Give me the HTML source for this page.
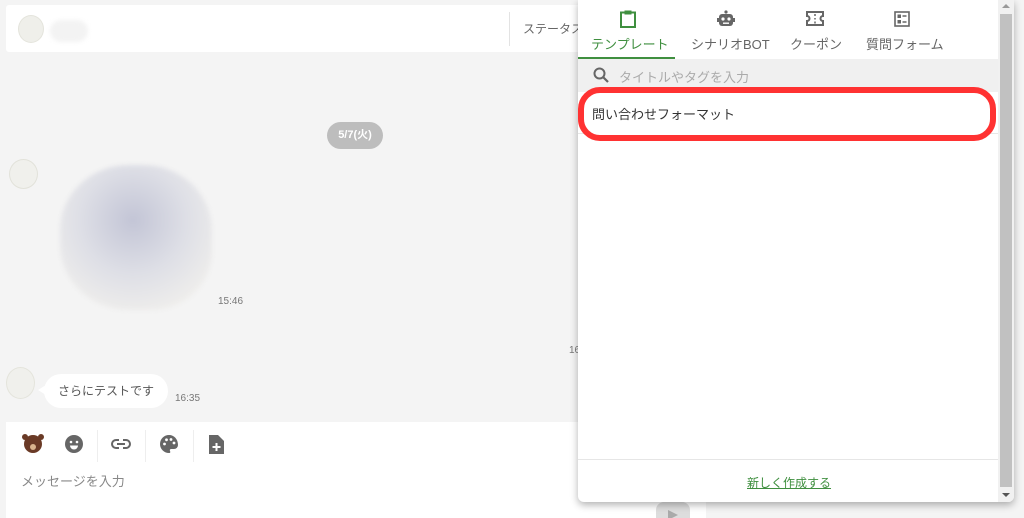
<!DOCTYPE html>
<html style="width:1024px;height:518px;overflow:hidden"><head><meta charset="utf-8"><style>
*{box-sizing:border-box;margin:0;padding:0}
body{width:1024px;height:518px;overflow:hidden;background:#f4f4f4;font-family:"Liberation Sans","Noto Sans CJK JP",sans-serif;position:relative;color:#333}
.abs{position:absolute}
</style></head><body>
<!-- header -->
<div class="abs" style="left:6px;top:5px;width:600px;height:47px;background:#fff;border-radius:3px"></div>
<div class="abs" style="left:18px;top:15px;width:26px;height:28px;border-radius:50%;background:#efefea;border:1px solid #e4e4dc"></div>
<div class="abs" style="left:50px;top:20px;width:38px;height:22px;border-radius:11px;background:#f3f3f3;filter:blur(2px)"></div>
<div class="abs" style="left:509px;top:12px;width:1px;height:34px;background:#e3e3e3"></div>
<div class="abs" style="left:523px;top:20px;font-size:12px;color:#666;white-space:nowrap">ステータス</div>
<!-- date pill -->
<div class="abs" style="left:327px;top:122px;width:56px;height:27px;border-radius:14px;background:#bdbdbd;color:#fff;font-size:11px;font-weight:bold;text-align:center;line-height:27px">5/7(火)</div>
<!-- avatar + image -->
<div class="abs" style="left:9px;top:159px;width:29px;height:30px;border-radius:50%;background:#f0f0ec;border:1px solid #e2e2da"></div>
<div class="abs" style="left:60px;top:165px;width:152px;height:145px;border-radius:45% 45% 40% 45%;background:radial-gradient(circle at 48% 38%,#c3c5d6,#dedfe6 45%,#efeeec 80%);filter:blur(2px)"></div>
<div class="abs" style="left:218px;top:296px;font-size:10px;color:#777">15:46</div>
<div class="abs" style="left:569px;top:345px;font-size:10px;color:#777">16</div>
<!-- message -->
<div class="abs" style="left:6px;top:367px;width:29px;height:32px;border-radius:50%;background:#f0f0ec;border:1px solid #e4e4dc"></div>
<div class="abs" style="left:44px;top:374px;height:34px;border-radius:17px;background:#fff;font-size:12px;color:#555;line-height:34px;padding:0 14px;white-space:nowrap">さらにテストです</div>
<div class="abs" style="left:38px;top:385px;width:0;height:0;border-top:5px solid transparent;border-bottom:5px solid transparent;border-right:8px solid #fff"></div>
<div class="abs" style="left:175px;top:393px;font-size:10px;color:#777">16:35</div>
<!-- input area -->
<div class="abs" style="left:6px;top:422px;width:700px;height:96px;background:#fff"></div>
<div class="abs" style="left:24px;top:435px;width:18px;height:18px;border-radius:50%;background:#6a3a26"></div>
<div class="abs" style="left:22px;top:434px;width:6px;height:6px;border-radius:50%;background:#6a3a26"></div>
<div class="abs" style="left:38px;top:434px;width:6px;height:6px;border-radius:50%;background:#6a3a26"></div>
<div class="abs" style="left:30px;top:444px;width:6px;height:6px;border-radius:50%;background:#d9b48e"></div>
<svg class="abs" style="left:65px;top:435px" width="18" height="18" viewBox="0 0 18 18"><circle cx="9" cy="9" r="9" fill="#666"/><circle cx="6" cy="7" r="1.3" fill="#fff"/><circle cx="12" cy="7" r="1.3" fill="#fff"/><path d="M5 10.5h8a4 4 0 0 1-8 0z" fill="#fff"/></svg>
<div class="abs" style="left:97px;top:430px;width:1px;height:32px;background:#eee"></div>
<svg class="abs" style="left:111px;top:437px" width="20" height="14" viewBox="0 0 20 14"><path d="M8 3H5a4 4 0 0 0 0 8h3M12 3h3a4 4 0 0 1 0 8h-3M6 7h8" stroke="#666" stroke-width="2" fill="none"/></svg>
<div class="abs" style="left:145px;top:430px;width:1px;height:32px;background:#eee"></div>
<svg class="abs" style="left:160px;top:435px" width="18" height="18" viewBox="0 0 18 18"><path d="M9 0a9 9 0 0 0 0 18c1.5 0 1.5-1 1-2s0-2 1.5-2H14a4 4 0 0 0 4-4C18 4 14 0 9 0z" fill="#666"/><circle cx="4.5" cy="9" r="1.4" fill="#fff"/><circle cx="6.5" cy="4.8" r="1.4" fill="#fff"/><circle cx="11" cy="4.5" r="1.4" fill="#fff"/><circle cx="14" cy="8" r="1.4" fill="#fff"/></svg>
<div class="abs" style="left:193px;top:430px;width:1px;height:32px;background:#eee"></div>
<svg class="abs" style="left:209px;top:435px" width="15" height="19" viewBox="0 0 15 19"><path d="M0 0h9l6 6v13H0z" fill="#666"/><path d="M7.5 8v8M3.5 12h8" stroke="#fff" stroke-width="2"/></svg>
<div class="abs" style="left:21px;top:471px;font-size:13px;color:#888">メッセージを入力</div>
<div class="abs" style="left:656px;top:502px;width:34px;height:16px;border-radius:8px 8px 0 0;background:#ddd"></div>
<div class="abs" style="left:668px;top:510px;width:0;height:0;border-top:5px solid transparent;border-bottom:5px solid transparent;border-left:10px solid #aaa"></div>
<!-- right strip -->
<div class="abs" style="left:1013px;top:0;width:11px;height:518px;background:#f4f4f4"></div>
<!-- panel -->
<div class="abs" style="left:578px;top:0;width:436px;height:502px;background:#fff;border-radius:0 0 6px 6px;box-shadow:0 3px 8px rgba(0,0,0,.3);overflow:hidden">
  <svg class="abs" style="left:42px;top:10px" width="16" height="18" viewBox="0 0 16 18"><rect x="1" y="2.5" width="14" height="14.5" fill="none" stroke="#3f8f3f" stroke-width="2"/><rect x="4.5" y="0.5" width="7" height="4" fill="#3f8f3f"/></svg>
  <div class="abs" style="left:13px;top:34px;font-size:13px;color:#3f8f3f">テンプレート</div>
  <div class="abs" style="left:0;top:57px;width:97px;height:2px;background:#3f8f3f"></div>
  <svg class="abs" style="left:139px;top:10px" width="18" height="18" viewBox="0 0 18 18"><circle cx="9" cy="2" r="1.6" fill="#666"/><rect x="2" y="4" width="14" height="12" rx="3" fill="#666"/><circle cx="6" cy="9" r="1.6" fill="#fff"/><circle cx="12" cy="9" r="1.6" fill="#fff"/><rect x="6" y="12.5" width="6" height="1.4" fill="#fff"/><rect x="0" y="8" width="2" height="4" fill="#666"/><rect x="16" y="8" width="2" height="4" fill="#666"/></svg>
  <div class="abs" style="left:113px;top:34px;font-size:13px;color:#666">シナリオBOT</div>
  <svg class="abs" style="left:228px;top:11px" width="18" height="15" viewBox="0 0 18 15"><path d="M1 1h16v4a2.5 2.5 0 0 0 0 5v4H1v-4a2.5 2.5 0 0 0 0-5z" fill="none" stroke="#666" stroke-width="2"/><path d="M9 3v2M9 7v1.5M9 10.5v2" stroke="#666" stroke-width="1.5"/></svg>
  <div class="abs" style="left:212px;top:34px;font-size:13px;color:#666">クーポン</div>
  <svg class="abs" style="left:316px;top:11px" width="16" height="16" viewBox="0 0 16 16"><rect x="1" y="1" width="14" height="14" fill="none" stroke="#666" stroke-width="1.6"/><rect x="3.5" y="3.5" width="3.5" height="3.5" fill="#666"/><rect x="3.5" y="9" width="3.5" height="3.5" fill="#666"/><path d="M8.5 5h4M8.5 11h4" stroke="#666" stroke-width="1.5"/></svg>
  <div class="abs" style="left:288px;top:34px;font-size:13px;color:#666">質問フォーム</div>
  <div class="abs" style="left:0;top:59px;width:420px;height:33px;background:#f0f0f0"></div>
  <svg class="abs" style="left:15px;top:67px" width="16" height="16" viewBox="0 0 16 16"><circle cx="6.5" cy="6.5" r="5" fill="none" stroke="#666" stroke-width="2"/><path d="M10 10l5 5" stroke="#666" stroke-width="2.2"/></svg>
  <div class="abs" style="left:41px;top:67px;font-size:13px;color:#aaa">タイトルやタグを入力</div>
  <div class="abs" style="left:0;top:133px;width:420px;height:1px;background:#e6e6e6"></div>
  <div class="abs" style="left:0;top:87px;width:418px;height:54px;border:6px solid #ff3232;border-radius:22px;background:#fff"></div>
  <div class="abs" style="left:14px;top:104px;font-size:13px;color:#333">問い合わせフォーマット</div>
  <div class="abs" style="left:0;top:459px;width:420px;height:1px;background:#e6e6e6"></div>
  <div class="abs" style="left:169px;top:474px;font-size:12px;color:#3f8f3f;text-decoration:underline">新しく作成する</div>
  <div class="abs" style="left:420px;top:0;width:16px;height:502px;background:#f1f1f1"></div>
  <div class="abs" style="left:422px;top:14px;width:12px;height:473px;background:#c1c1c1"></div>
  <div class="abs" style="left:424px;top:4px;width:0;height:0;border-left:4px solid transparent;border-right:4px solid transparent;border-bottom:4px solid #999"></div>
  <div class="abs" style="left:424px;top:493px;width:0;height:0;border-left:4px solid transparent;border-right:4px solid transparent;border-top:4px solid #555"></div>
</div>
</body></html>
